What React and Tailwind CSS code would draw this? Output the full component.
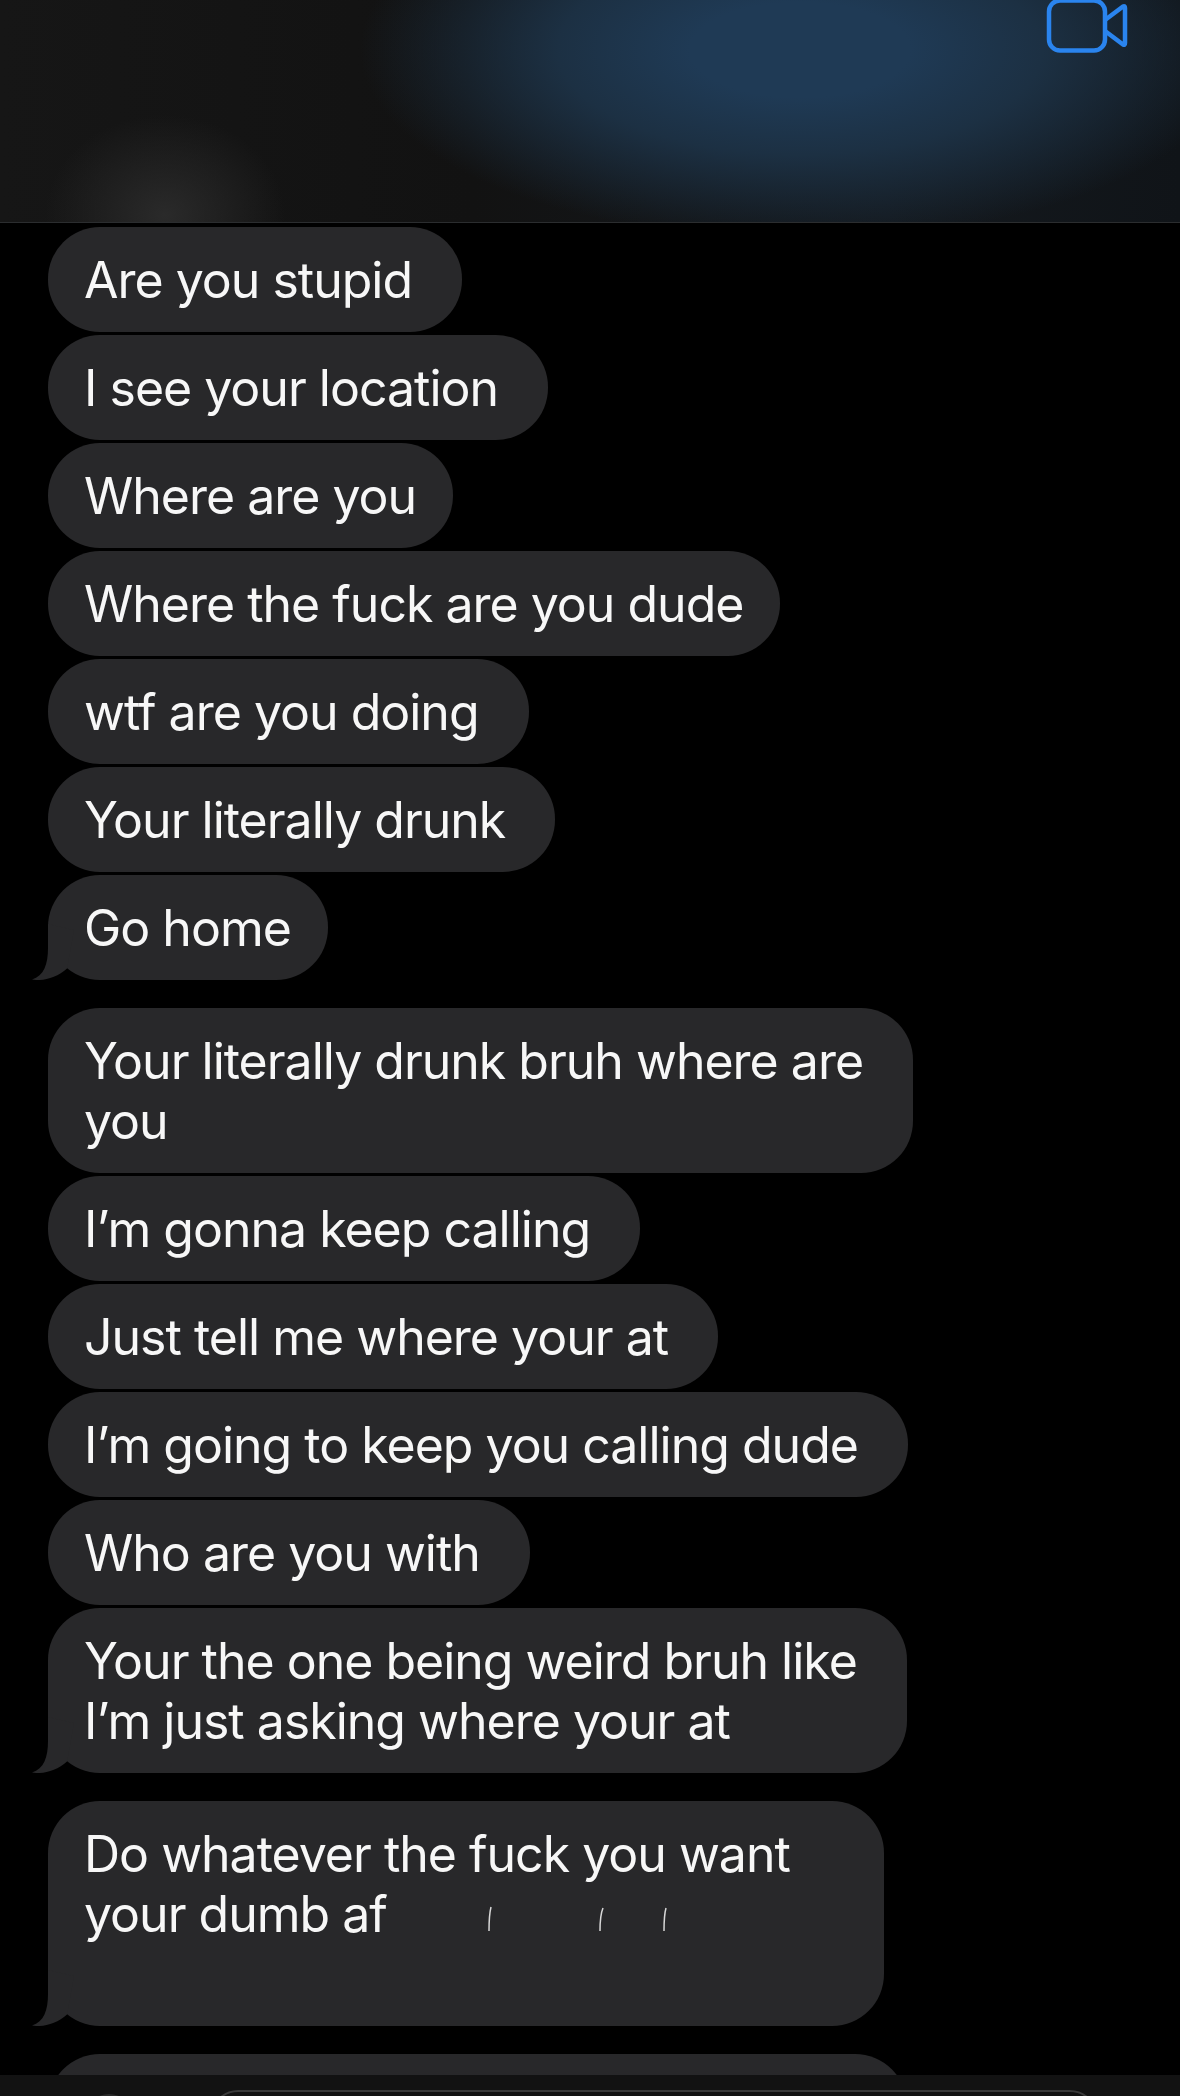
const bubbleGroups = [
  [
    { text: "Are you stupid" },
    { text: "I see your location" },
    { text: "Where are you", tight: true },
    { text: "Where the fuck are you dude", tight: true },
    { text: "wtf are you doing" },
    { text: "Your literally drunk" },
    { text: "Go home", tight: true },
  ],
  [
    { text: "Your literally drunk bruh where are\nyou" },
    { text: "I’m gonna keep calling" },
    { text: "Just tell me where your at" },
    { text: "I’m going to keep you calling dude" },
    { text: "Who are you with" },
    { text: "Your the one being weird bruh like\nI’m just asking where your at" },
  ],
];

function Tail() {
  return (
    <svg className="absolute left-[-16px] bottom-0" width="44" height="60" viewBox="0 0 44 60">
      <path d="M16 4 L16 28 C16 44 12 56 0 59.5 C10 61.5 25 58 35 48.5 L42 10 Z" fill="#28282a" />
    </svg>
  );
}

function Bubble({ text, tight, tail }) {
  return (
    <div
      className={`relative w-fit rounded-[52px] bg-[#28282a] pl-[36px] pt-[23px] pb-[22px] text-[50px] leading-[60px] tracking-[-1px] text-[#f7f7f7] whitespace-pre ${
        tight ? "pr-[37px]" : "pr-[50px]"
      }`}
    >
      {text}
      {tail && <Tail />}
    </div>
  );
}

export default function App() {
  return (
    <div className="flex h-[2096px] w-[1180px] flex-col overflow-hidden bg-black font-['Inter',sans-serif]">
      <header className="relative flex h-[223px] shrink-0 justify-end border-b border-[#2b2d2f] bg-[radial-gradient(ellipse_120px_100px_at_165px_215px,#2a2a2a,transparent),radial-gradient(ellipse_440px_190px_at_800px_50px,#1f3a55_25%,#1c3043_55%,transparent),linear-gradient(90deg,#161616,#121212_40%,#14191e_75%,#101418)]">
        <svg className="mr-[50px] mt-[-2px]" width="84" height="56" viewBox="0 0 84 56" fill="none" stroke="#2a84ee" strokeWidth="4.5" strokeLinejoin="round">
          <rect x="3" y="2.5" width="56" height="50" rx="11" />
          <path d="M59 22 L77 8.5 Q79 7.5 79 10 L79 45 Q79 47.5 77 46.5 L59 33" />
        </svg>
      </header>

      <main className="flex flex-1 flex-col overflow-hidden pl-12 pt-1">
        {bubbleGroups.map((group, i) => (
          <div key={i} className={i === 0 ? "flex flex-col gap-[3px]" : "mt-7 flex flex-col gap-[3px]"}>
            {group.map((item, j) => (
              <Bubble key={j} text={item.text} tight={item.tight} tail={j === group.length - 1} />
            ))}
          </div>
        ))}

        <div className="relative mt-7 w-[836px] shrink-0 rounded-[52px] bg-[#28282a] pl-[36px] pt-[23px] pb-[22px] text-[50px] leading-[60px] tracking-[-1px] text-[#f7f7f7] whitespace-pre">
          {"Do whatever the fuck you want\nyour dumb af\n "}
          <svg className="absolute left-[436px] top-[100px]" width="240" height="34" viewBox="0 0 240 34" fill="none" stroke="#d8d8d8" strokeWidth="1.5">
            <path d="M5 30 Q5 14 7 6" />
            <path d="M116 30 Q116 14 119 7" />
            <path d="M180 30 Q180 14 182 7" />
          </svg>
          <Tail />
        </div>

        <div className="mt-7 h-[104px] w-[859px] shrink-0 rounded-[52px] bg-[#28282a]" />
      </main>

      <footer className="flex h-[21px] shrink-0 items-start overflow-hidden bg-[#121212] pl-[85px] pt-[15px]">
        <div className="mt-1 h-12 w-[48px] shrink-0 rounded-full bg-[#2a2a2a]" />
        <div className="ml-[77px] h-14 w-[888px] shrink-0 rounded-[40px] border-2 border-[#3a3a3a]" />
      </footer>
    </div>
  );
}
